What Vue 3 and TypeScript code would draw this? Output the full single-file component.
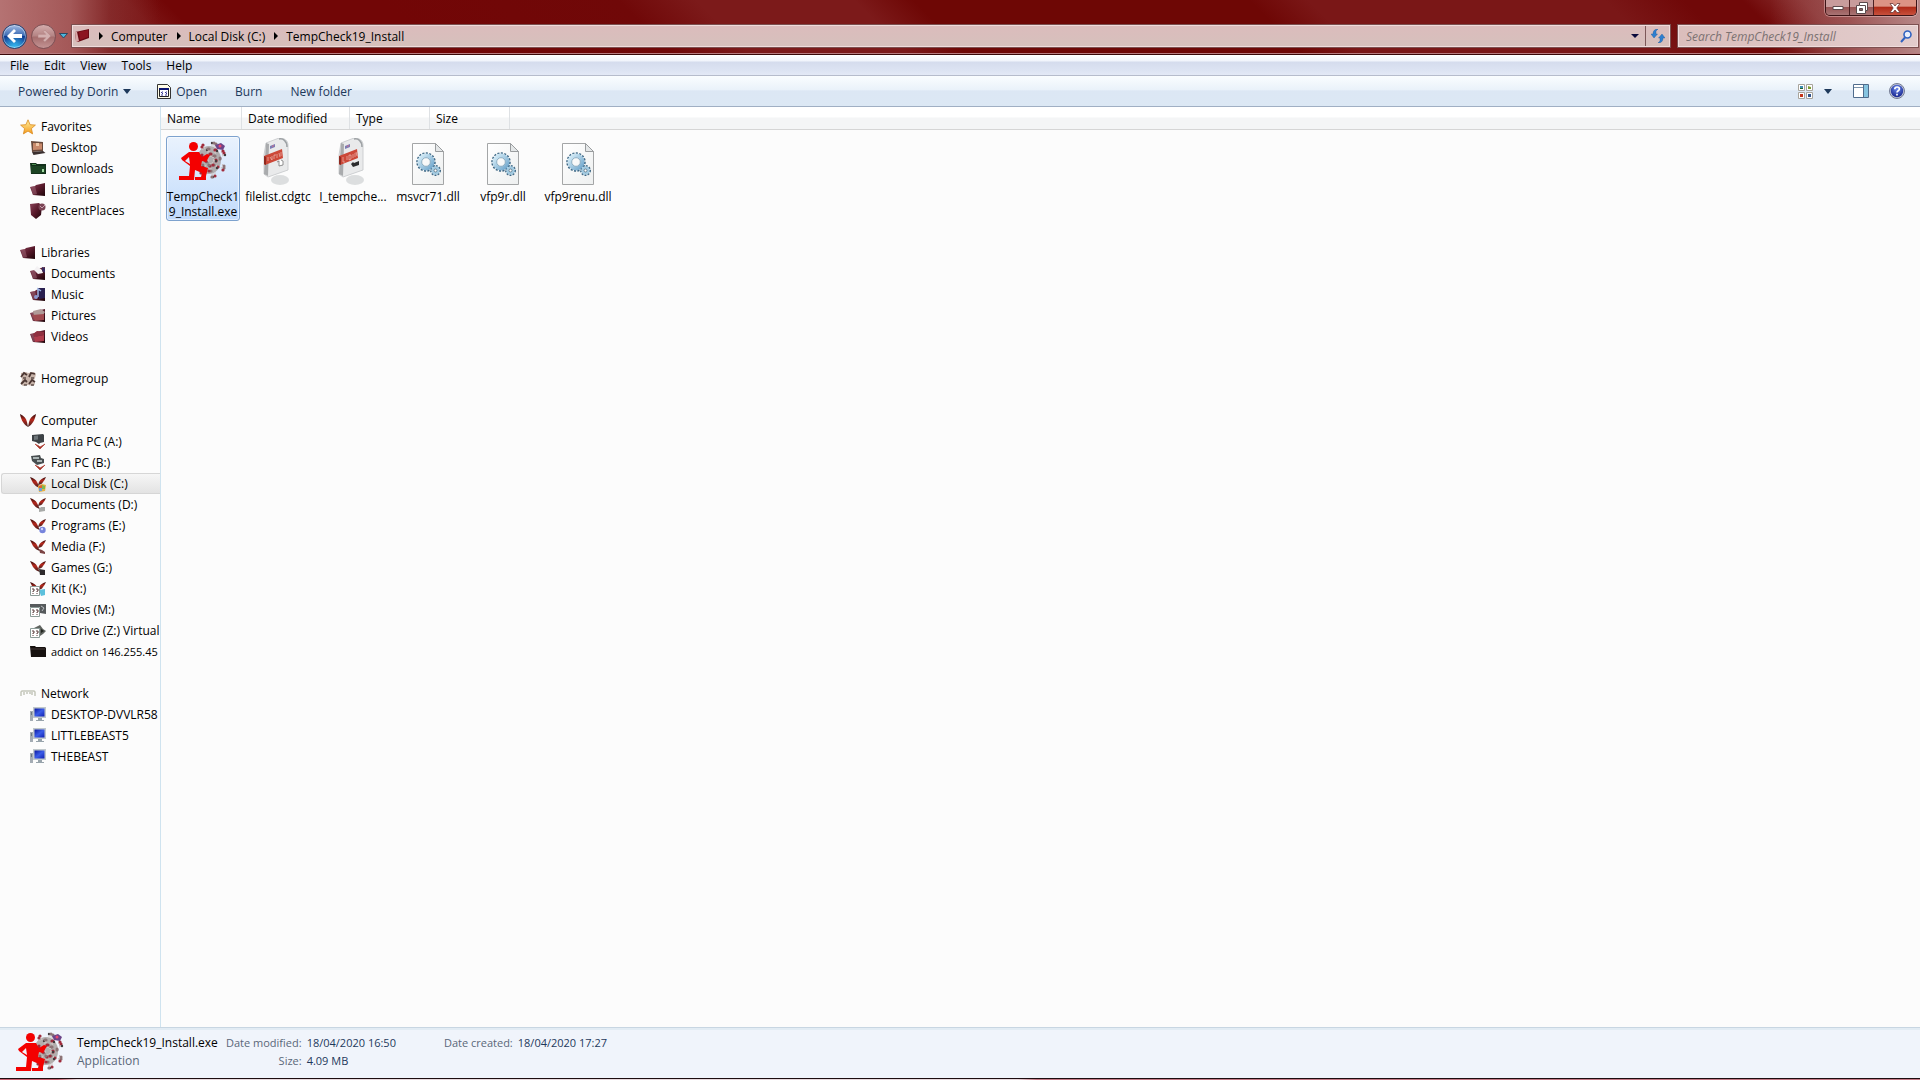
<script setup lang="ts">
interface NavItem { label: string; icon: string; selected?: boolean; compact?: boolean }
interface NavGroup { label: string; icon: string; items: NavItem[] }
interface FileItem { name: string; icon: string; selected?: boolean }

const menus: string[] = ['File', 'Edit', 'View', 'Tools', 'Help']
const crumbs: string[] = ['Computer', 'Local Disk (C:)', 'TempCheck19_Install']

const groups: NavGroup[] = [
  {
    label: 'Favorites', icon: 'star', items: [
      { label: 'Desktop', icon: 'desktop' },
      { label: 'Downloads', icon: 'downloads' },
      { label: 'Libraries', icon: 'folder' },
      { label: 'RecentPlaces', icon: 'recent' },
    ],
  },
  {
    label: 'Libraries', icon: 'folder', items: [
      { label: 'Documents', icon: 'documents' },
      { label: 'Music', icon: 'music' },
      { label: 'Pictures', icon: 'pictures' },
      { label: 'Videos', icon: 'videos' },
    ],
  },
  { label: 'Homegroup', icon: 'homegroup', items: [] },
  {
    label: 'Computer', icon: 'wings', items: [
      { label: 'Maria PC (A:)', icon: 'pc-a' },
      { label: 'Fan PC (B:)', icon: 'pc-b' },
      { label: 'Local Disk (C:)', icon: 'drive-c', selected: true },
      { label: 'Documents (D:)', icon: 'drive-d' },
      { label: 'Programs (E:)', icon: 'drive-e' },
      { label: 'Media (F:)', icon: 'drive-f' },
      { label: 'Games (G:)', icon: 'drive-g' },
      { label: 'Kit (K:)', icon: 'drive-k' },
      { label: 'Movies (M:)', icon: 'drive-m' },
      { label: 'CD Drive (Z:) Virtual', icon: 'drive-z' },
      { label: 'addict on 146.255.45', icon: 'black-folder', compact: true },
    ],
  },
  {
    label: 'Network', icon: 'network', items: [
      { label: 'DESKTOP-DVVLR58', icon: 'monitor' },
      { label: 'LITTLEBEAST5', icon: 'monitor' },
      { label: 'THEBEAST', icon: 'monitor' },
    ],
  },
]

const files: FileItem[] = [
  { name: 'TempCheck19_Install.exe', icon: 'exe', selected: true },
  { name: 'filelist.cdgtc', icon: 'cdgtc' },
  { name: 'I_tempche...', icon: 'library' },
  { name: 'msvcr71.dll', icon: 'dll' },
  { name: 'vfp9r.dll', icon: 'dll' },
  { name: 'vfp9renu.dll', icon: 'dll' },
]

// Spikes of the virus ball, laid out in rings round its centre.
const spikes = Array.from({ length: 54 }, (_, i) => {
  const ring = i % 3
  const angle = (i * 137.5 * Math.PI) / 180
  const r = 5 + ring * 5
  return {
    x1: Math.round(32 + Math.cos(angle) * (r - 3)),
    y1: Math.round(22 + Math.sin(angle) * (r - 2)),
    x: Math.round(32 + Math.cos(angle) * r * 0.95),
    y: Math.round(22 + Math.sin(angle) * r * 1.15),
    red: i % 5 < 2,
    dark: i % 5 === 2,
  }
})
</script>

<template>
  <svg class="defs" aria-hidden="true">
    <defs>
      <linearGradient id="g-folder" x1="0" y1="0" x2="1" y2="1">
        <stop offset="0" stop-color="#8a4458" /><stop offset=".5" stop-color="#5a1a2c" /><stop offset="1" stop-color="#1c0408" />
      </linearGradient>
      <linearGradient id="g-star" x1="0" y1="0" x2="0" y2="1">
        <stop offset="0" stop-color="#fff2a0" /><stop offset="1" stop-color="#f59a1c" />
      </linearGradient>
      <linearGradient id="g-wing" x1="0" y1="0" x2="0" y2="1">
        <stop offset="0" stop-color="#2e0c0c" /><stop offset=".45" stop-color="#b8281c" /><stop offset="1" stop-color="#3c2020" />
      </linearGradient>
      <linearGradient id="g-blue" x1="0" y1="0" x2="1" y2="1">
        <stop offset="0" stop-color="#0a18a0" /><stop offset=".5" stop-color="#3a5ce8" /><stop offset="1" stop-color="#1020b0" />
      </linearGradient>
      <linearGradient id="g-page" x1="0" y1="0" x2="1" y2="1">
        <stop offset="0" stop-color="#ffffff" /><stop offset="1" stop-color="#eef0f0" />
      </linearGradient>
      <linearGradient id="g-gear" x1="0" y1="0" x2="1" y2="1">
        <stop offset="0" stop-color="#d8eef8" /><stop offset="1" stop-color="#6fa6cc" />
      </linearGradient>
      <radialGradient id="g-help" cx=".5" cy=".3" r=".7">
        <stop offset="0" stop-color="#6d8cf0" /><stop offset="1" stop-color="#16248c" />
      </radialGradient>
    </defs>

    <symbol id="i-star" viewBox="0 0 16 16">
      <path d="M8 .8l2.1 4.9 5.3.4-4 3.5 1.2 5.3L8 12.100l-4.600 2.800 1.200-5.300-4-3.500 5.300-.4z" fill="url(#g-star)" stroke="#d98a1e" stroke-width=".8" />
    </symbol>
    <symbol id="i-desktop" viewBox="0 0 16 16">
      <path d="M1 1l12 1v9l-11 1z" fill="#6a4a3c" /><path d="M3 3l9 .5v6L3 10z" fill="#c98a6c" />
      <path d="M6 3h3v3H6z" fill="#f0c8a8" /><path d="M2 12l11-1 2.500 2-12 2z" fill="#3a3030" />
    </symbol>
    <symbol id="i-downloads" viewBox="0 0 16 16">
      <path d="M0 2h6l1 1h9v10H1z" fill="#12301a" /><path d="M1 5h14v7H1z" fill="#1c4424" />
      <path d="M2 3h4v1H2z" fill="#4a8c50" /><path d="M12 8h2v3h-2z" fill="#9fd89f" />
    </symbol>
    <symbol id="i-folder" viewBox="0 0 16 16">
      <path d="M0 5l5-1 1-1 9-2v13L3 13z" fill="url(#g-folder)" /><path d="M1 5l4-1 2 8-4 1z" fill="#a06878" opacity=".5" />
    </symbol>
    <symbol id="i-recent" viewBox="0 0 16 16">
      <path d="M0 1l9-1 3 3-1 9-5 4-5-4z" fill="url(#g-folder)" /><circle cx="12" cy="4" r="3.500" fill="#7a4454" /><path d="M10 3l2 2 3-3" stroke="#c8a0b0" fill="none" />
    </symbol>
    <symbol id="i-documents" viewBox="0 0 16 16">
      <use href="#i-folder" /><path d="M4 4l3-4 5 4 1 3-5 1z" fill="#f4f2f4" /><path d="M12 1l3 1v5l-3-2z" fill="#3a2a5c" />
    </symbol>
    <symbol id="i-music" viewBox="0 0 16 16">
      <use href="#i-folder" /><path d="M8 1h7v10l-6 1z" fill="#2a2050" /><path d="M8 10V2l3 2" stroke="#9cb4e4" fill="none" stroke-width="1.500" /><circle cx="6" cy="10" r="2" fill="#8c98d0" />
    </symbol>
    <symbol id="i-pictures" viewBox="0 0 16 16">
      <use href="#i-folder" /><path d="M3 3l8-2 4 3-2 3-9 1z" fill="#b09a98" /><path d="M2 7l12-1v6l-9 1z" fill="#a04a50" />
    </symbol>
    <symbol id="i-videos" viewBox="0 0 16 16">
      <use href="#i-folder" /><path d="M3 5l4-3 7 1v3L4 8z" fill="#903040" /><path d="M4 8l10-2v6l-9 1z" fill="#b03c4c" />
    </symbol>
    <symbol id="i-homegroup" viewBox="0 0 16 16">
      <path d="M1 2l5-1 2 1 6-1 2 2-1 4-1 2 1 4-2 2-5-1-5 1-2-2 1-5-1-3z" fill="#c8b4aa" />
      <g fill="none" stroke="#4a3632" stroke-width="1.800"><path d="M1 6l3-4 3 2M9 6l2-4 4 1M1 13l4-4 2 2M9 13l3-4 3 2" /></g>
      <path d="M3 7h3M11 7h3M4 14h3M11 14h3" stroke="#2a1c1a" />
    </symbol>
    <symbol id="i-wings" viewBox="0 0 16 16">
      <path d="M0 1c4 2 6 4 7 8l1 5C4 12 1 7 0 1z" fill="url(#g-wing)" />
      <path d="M16 1c-4 2-6 4-7 8l-1 5c4-2 7-7 8-13z" fill="url(#g-wing)" />
    </symbol>
    <symbol id="i-drive" viewBox="0 0 16 16">
      <path d="M0 1c4 1 6 3 7 5l3 6c-4-1-5-3-7-5C2 5 1 3 0 1z" fill="url(#g-wing)" />
      <path d="M16 1c-4 1-6 3-7 5l-1 3c3-1 4-1 5-3 1-1 2-3 3-5z" fill="url(#g-wing)" />
    </symbol>
    <symbol id="i-drive-c" viewBox="0 0 16 16"><use href="#i-drive" /><path d="M8 10l4-2 4 1-1 6-6 1z" fill="#e8b040" /><path d="M9 10l3-1v3H9z" fill="#e06030" /><path d="M12 9l3 1v3h-3z" fill="#80b850" /><path d="M9 12h3v3H9z" fill="#68a0d8" /></symbol>
    <symbol id="i-drive-d" viewBox="0 0 16 16"><use href="#i-drive" /><path d="M9 12l2-2h4v4l-6 1z" fill="#a8aaa8" /></symbol>
    <symbol id="i-drive-e" viewBox="0 0 16 16"><use href="#i-drive" /><circle cx="12.500" cy="12" r="3.200" fill="#7684dc" /><circle cx="12" cy="11" r="1.200" fill="#cdd4ff" /></symbol>
    <symbol id="i-drive-f" viewBox="0 0 16 16"><use href="#i-drive" /><path d="M9 10l3 1 3 2v2l-5-1z" fill="#7c4444" /></symbol>
    <symbol id="i-drive-g" viewBox="0 0 16 16"><use href="#i-drive" /><path d="M9 9l6 1v5h-5z" fill="#2e2a2c" /></symbol>
    <symbol id="i-qmark" viewBox="0 0 16 16">
      <path d="M.5 5.500h9v9h-9z" fill="#fff" stroke="#8c9c98" />
      <path d="M2 8h2v2H3v1M6 8h2v2H7v1M3 12v1M7 12v1" stroke="#5a3c3c" fill="none" />
    </symbol>
    <symbol id="i-drive-k" viewBox="0 0 16 16"><use href="#i-drive" /><path d="M9 9l6-1v6l-4 1z" fill="#5cc0dc" /><use href="#i-qmark" /></symbol>
    <symbol id="i-drive-m" viewBox="0 0 16 16"><path d="M0 2h16v10l-6-1V5H0z" fill="#565a5c" /><path d="M11 4l3 2-2 3" stroke="#b8bcc0" fill="none" /><use href="#i-qmark" /></symbol>
    <symbol id="i-drive-z" viewBox="0 0 16 16"><path d="M4 5l6-3 3 4 3 2-3 3-3 2V6z" fill="#606460" /><path d="M11 6l3 2-3 2z" fill="#20241e" /><use href="#i-qmark" /></symbol>
    <symbol id="i-vee" viewBox="0 0 16 16"><path d="M5 10l4 2 1 1 5-3-5 5z" fill="#a83428" stroke="#a83428" stroke-width=".6" /></symbol>
    <symbol id="i-pc-a" viewBox="0 0 16 16"><path d="M2 1l11-1 1 1v7l-4 1-1 1-3-2-4-1z" fill="#3c4246" /><path d="M4 2l4-.5v4L4 6z" fill="#6c7478" /><use href="#i-vee" /></symbol>
    <symbol id="i-pc-b" viewBox="0 0 16 16"><path d="M1 1l9-1 1 3 3 1v4l-7 2-5-4z" fill="#484e50" /><path d="M3 2h6v2H3zM7 5h5v2H7z" fill="#aab4b4" /><use href="#i-vee" /></symbol>
    <symbol id="i-black-folder" viewBox="0 0 16 16"><path d="M0 2h5l1 1h9l1 1v9H1z" fill="#16110f" /><path d="M1 5h14" stroke="#463a38" /></symbol>
    <symbol id="i-network" viewBox="0 0 16 16"><path d="M1 10V6l1-1h12l1 1v4M4 6v3M7 6v2M10 6v2M12 6v3" fill="none" stroke="#c4c6ba" stroke-width="1.500" /></symbol>
    <symbol id="i-monitor" viewBox="0 0 16 16">
      <path d="M0 4h3v10H0z" fill="#a4acb4" /><path d="M1 5h1v3H1z" fill="#6c7880" />
      <path d="M3 0h13v11H3z" fill="#c0c8cc" /><path d="M4.500 1.500h10v8h-10z" fill="url(#g-blue)" /><path d="M8 11h4v2h2v1H6v-1h2z" fill="#98a4ac" />
    </symbol>

    <symbol id="i-exe" viewBox="0 0 48 48">
      <ellipse cx="30" cy="22" rx="12" ry="14" fill="#a49c9a" opacity=".8" />
      <g v-for="(s, i) in spikes" :key="i">
        <path :d="`M${s.x1} ${s.y1}L${s.x} ${s.y}`" stroke="#cfc6c4" stroke-width="1" />
        <circle :cx="s.x" :cy="s.y" :r="s.dark ? 1.2 : 1.6" :fill="s.red ? '#a02c3c' : s.dark ? '#403a3c' : '#8c7476'" />
      </g>
      <path d="M36 7l6-2 4 3-2 4-6-1z" fill="#6c4488" /><circle cx="41" cy="8" r="1.500" fill="#e84870" />
      <circle cx="14.500" cy="8.500" r="4.500" fill="#f40000" />
      <path d="M10 14h10l3 5 5-3 3 1-4 7-4-1-1 5 7 2-2 8v4H16v-3h6l1-4-7-3-1 10H0v-4h10l1-10-8-6-1-2zM10 19l-4 4 5 3z" fill="#f40000" fill-rule="evenodd" />
    </symbol>
    <symbol id="i-tagpage" viewBox="0 0 48 48">
      <ellipse cx="26" cy="42" rx="9" ry="5" fill="#dcdedf" />
      <path d="M12 5L25 0c6 0 9 3 9 7v25l-20 7-4-3V17z" fill="#e9eaeb" stroke="#c4c7c9" stroke-width=".8" />
      <path d="M12 5l3 1-1 32-4-2z" fill="#a9abad" />
      <path d="M25 1c4-1 8 2 8 8" fill="none" stroke="#9da1a4" stroke-width="1.500" />
      <path d="M16 8l5-2v3l-5 2z" fill="#7c7cb4" /><path d="M18 8l2-1v1l-2 1z" fill="#d06c88" />
      <path d="M10 18l18-7 1 9-18 7-1-1z" fill="#cc4838" /><path d="M10 18l2 1v8l-2-1z" fill="#8f2a20" />
    </symbol>
    <symbol id="i-cdgtc" viewBox="0 0 48 48">
      <use href="#i-tagpage" />
      <path d="M14 19v4M16 19l2 3v-4M20 17v4M20 17h2M23 16v4M25 15l1 4M27 14v4" stroke="#f3cfc8" fill="none" stroke-width=".6" />
      <path d="M23 24l2-1v5l4-1v-4l-2-1" stroke="#777" fill="#fff" stroke-width=".8" />
    </symbol>
    <symbol id="i-library" viewBox="0 0 48 48">
      <use href="#i-tagpage" />
      <path d="M14 19v5h2M18 18v4M20 17v5l2-1v-4zM24 16v4M26 15v4M27 14l1 4" stroke="#f3cfc8" fill="none" stroke-width=".6" />
      <path d="M22 26l2-2 1 1 5-2v4l-6 2z" fill="#2c2c2e" />
    </symbol>
    <symbol id="i-dll" viewBox="0 0 48 48">
      <path d="M8.500 5.500h23l8 8v33h-31z" fill="url(#g-page)" stroke="#a4a6a7" />
      <path d="M31.500 5.500v8h8z" fill="#e4e7e8" stroke="#999c9e" />
      <g fill="none" stroke="#3f6885"><circle cx="22" cy="24" r="8.500" stroke-width="2.500" stroke-dasharray="2 1.300" /><circle cx="31.500" cy="32.500" r="4.500" stroke-width="2" stroke-dasharray="1.800 1.200" /></g>
      <circle cx="22" cy="24" r="6.500" fill="none" stroke="url(#g-gear)" stroke-width="4" />
      <circle cx="22" cy="24" r="4.300" fill="none" stroke="#6a93ae" stroke-width=".7" />
      <circle cx="31.500" cy="32.500" r="3" fill="#fff" stroke="#a3cbe2" stroke-width="2.500" />
      <circle cx="31.500" cy="32.500" r="1.500" fill="#fff" stroke="#37566c" stroke-width=".7" />
    </symbol>
  </svg>

  <div class="window">
    <header class="glass">
      <div class="controls">
        <button class="ctl" aria-label="Minimize"><svg width="12" height="6" viewBox="0 0 12 6"><path d="M1 1.500h10v3H1z" fill="#fff" stroke="#5b4a4c" /></svg></button>
        <button class="ctl" aria-label="Restore"><svg width="12" height="12" viewBox="0 0 12 12"><path d="M3.500.5h8v8h-2v3h-9v-8h3z" fill="#fff" stroke="#5b4a4c" /><path d="M3.500 6.500h3v2h-3z" fill="#8b6466" stroke="#5b4a4c" /><path d="M4 3.500h5.500v5" fill="none" stroke="#5b4a4c" /></svg></button>
        <button class="ctl close" aria-label="Close"><svg width="12" height="10" viewBox="0 0 12 10"><path d="M1 .5h3l2 2.500 2-2.500h3L7.800 5 11 9.500H8L6 7 4 9.500H1L4.200 5z" fill="#fff" stroke="#6b3a38" stroke-width=".8" /></svg></button>
      </div>
      <div class="nav-row">
        <button class="round back" aria-label="Back"><svg width="16" height="14" viewBox="0 0 16 14"><path d="M7 0L0 7l7 7 2-2-3-3h9V5H6l3-3z" fill="#fff" /></svg></button>
        <button class="round forward" aria-label="Forward"><svg width="14" height="12" viewBox="0 0 16 14"><path d="M9 0l7 7-7 7-2-2 3-3H1V5h9L7 2z" fill="#d3b0b0" stroke="#b08080" stroke-width=".6" /></svg></button>
        <button class="history" aria-label="Recent pages"><svg width="9" height="6" viewBox="0 0 9 6"><path d="M.5.5h8l-4 4.500z" fill="#4cb4dc" stroke="#173a56" stroke-width=".8" /></svg></button>
        <nav class="address" aria-label="Address">
          <svg width="16" height="14" viewBox="0 0 16 14"><path d="M0 3l5-1 9-2v9L3 13l-2-1z" fill="#6a0a14" /><path d="M4 3l9-2v7L5 11z" fill="#8c1420" /><path d="M0 3l2 0 2 9-3 1z" fill="#d8a8a8" /></svg>
          <template v-for="c in crumbs" :key="c">
            <svg class="sep" width="4" height="8" viewBox="0 0 4 8"><path d="M0 0l4 4-4 4z" fill="#000" /></svg>
            <a href="#" class="crumb">{{ c }}</a>
          </template>
          <span class="grow"></span>
          <button class="addr-drop" aria-label="Previous locations"><svg width="8" height="4" viewBox="0 0 8 4"><path d="M0 0h8L4 4z" fill="#0a0a3c" /></svg></button>
          <button class="refresh" aria-label="Refresh"><svg width="14" height="14" viewBox="0 0 14 14"><path d="M0 5l3 4 3.500-4H5V2l2-2C4 0 2 1.500 2 5z" fill="#2f7fd0" stroke="#1e5c9c" stroke-width=".4" /><path d="M14 9l-3-4-3.500 4H9v3l-2 2c3 0 5-1.500 5-5z" fill="#2f7fd0" stroke="#1e5c9c" stroke-width=".4" /></svg></button>
        </nav>
        <div class="search">
          <input type="search" aria-label="Search" placeholder="Search TempCheck19_Install" />
          <svg width="12" height="13" viewBox="0 0 12 13"><circle cx="7.500" cy="4.500" r="3.500" fill="#e8eefc" stroke="#2f62c0" stroke-width="1.600" /><path d="M5 7.500L1 12" stroke="#2f62c0" stroke-width="2" /></svg>
        </div>
      </div>
    </header>

    <nav class="menubar" aria-label="Menu">
      <button v-for="m in menus" :key="m">{{ m }}</button>
    </nav>

    <div class="toolbar">
      <button class="tool powered">Powered by Dorin <svg width="8" height="5" viewBox="0 0 8 5"><path d="M0 0h8L4 5z" fill="#1e395b" /></svg></button>
      <button class="tool open">
        <svg width="14" height="15" viewBox="0 0 14 15"><path d="M.5.500h10l3 3v11H.5z" fill="#fffde8" stroke="#333" /><path d="M2.500 4.500h9v8h-9z" fill="#fff" stroke="#222" /><path d="M2 4h10v2H2z" fill="#0a1470" /><path d="M4 8l2 2M8 8l2 2M4 11h2M8 11h2M5 8h1M9 8h1" stroke="#3c3c98" /></svg>
        Open
      </button>
      <button class="tool burn">Burn</button>
      <button class="tool">New folder</button>
      <span class="grow"></span>
      <button class="tool views" aria-label="Change your view">
        <svg width="15" height="15" viewBox="0 0 15 15"><path d="M.5.500h6v6h-6zM8.500.500h6v6h-6zM.5 8.500h6v6h-6zM8.500 8.500h6v6h-6z" fill="#fff" stroke="#a8a49c" /><path d="M2 2h3v2H2z" fill="#3c8cb0" /><path d="M2 4h3v1H2z" fill="#20642c" /><path d="M10 2l3 1v2h-3z" fill="#7c9c30" /><path d="M2 10h3v3H2z" fill="#c43418" /><path d="M10 10h3v3h-3z" fill="#30548c" /></svg>
      </button>
      <button class="tool view-drop" aria-label="More options"><svg width="8" height="5" viewBox="0 0 8 5"><path d="M0 0h8L4 5z" fill="#1e395b" /></svg></button>
      <button class="tool pane" aria-label="Show the preview pane">
        <svg width="16" height="14" viewBox="0 0 16 14"><path d="M.5.500h15v13H.5z" fill="#fff" stroke="#506c8c" /><path d="M1 3.500h9" stroke="#7c94ac" /><path d="M10.500 1v12.500" stroke="#506c8c" /><path d="M11 1h4v12h-4z" fill="#86c4e0" /></svg>
      </button>
      <button class="tool" aria-label="Get help">
        <svg width="16" height="16" viewBox="0 0 16 16"><circle cx="8" cy="8" r="7.500" fill="#c4c8d8" stroke="#747c94" /><circle cx="8" cy="8" r="6.200" fill="url(#g-help)" /><path d="M5.800 6.200c0-3 4.600-2.800 4.600-.2C10.400 7.700 8 7.700 8 9.500M8 10.800v1.700" fill="none" stroke="#fff" stroke-width="1.700" /></svg>
      </button>
    </div>

    <div class="body">
      <aside class="sidebar">
        <section v-for="g in groups" :key="g.label" class="group">
          <a href="#" class="row head"><svg width="16" height="16"><use :href="`#i-${g.icon}`" /></svg>{{ g.label }}</a>
          <a v-for="it in g.items" :key="it.label" href="#" class="row child" :class="{ selected: it.selected, compact: it.compact }">
            <svg width="16" height="16"><use :href="`#i-${it.icon}`" /></svg>{{ it.label }}
          </a>
        </section>
      </aside>
      <main class="content">
        <div class="columns">
          <button class="name">Name</button>
          <button class="date">Date modified</button>
          <button>Type</button>
          <button>Size</button>
        </div>
        <div class="files">
          <button v-for="f in files" :key="f.name" class="file" :class="{ selected: f.selected }">
            <svg width="48" height="48"><use :href="`#i-${f.icon}`" /></svg>
            <span>{{ f.name }}</span>
          </button>
        </div>
      </main>
    </div>

    <footer class="details">
      <svg width="48" height="44" viewBox="0 2 48 44"><use href="#i-exe" width="48" height="48" /></svg>
      <div class="title"><strong>TempCheck19_Install.exe</strong><span>Application</span></div>
      <dl class="meta first">
        <dt>Date modified:</dt><dd>18/04/2020 16:50</dd>
        <dt>Size:</dt><dd>4.09 MB</dd>
      </dl>
      <dl class="meta">
        <dt>Date created:</dt><dd>18/04/2020 17:27</dd>
      </dl>
    </footer>
    <div class="edge"></div>
  </div>
</template>

<style>
html, body { margin: 0; overflow: hidden; }
</style>

<style scoped>
.defs { position: absolute; width: 0; height: 0; }
.window {
  display: flex; flex-direction: column; height: 100vh; overflow: hidden;
  font: 12px/15px "Segoe UI", "Open Sans", "Noto Sans", sans-serif; color: #000; background: #fcfcfc;
}
button { font: inherit; color: inherit; background: none; border: 0; padding: 0; margin: 0; }
a { color: inherit; text-decoration: none; }
svg { display: block; flex: none; }
.grow { flex: 1; }

.glass {
  position: relative; box-sizing: border-box; height: 55px; flex: none; padding: 22px 2px 0 2px;
  border-bottom: 1px solid #3a0808; box-shadow: inset 0 -1px #b87c80;
  background:
    linear-gradient(90deg, rgba(190, 130, 130, .85), rgba(180, 115, 115, .7) 70px, rgba(140, 60, 60, .5) 110px, transparent 160px),
    linear-gradient(270deg, rgba(190, 150, 150, .8), rgba(170, 110, 110, .5) 70px, transparent 150px),
    linear-gradient(45deg, #801a1a 0, #7c1616 9%, #720606 11%, #720606 22%, #700808 34%, #7c1a1a 38%, #7c1a1a 46%, #6e0705 49%, #6e0705 66%, #7a1717 69%, #7a1717 84%, #700808 88%, #700808 91%, #8a3030 94%, #9c5050 100%);
}
.controls {
  position: absolute; top: 0; right: 3px; display: flex; height: 15px;
  border: 1px solid #3c1416; border-top: 0; border-radius: 0 0 5px 5px; overflow: hidden;
  box-shadow: 0 0 0 1px rgba(255, 220, 220, .4);
}
.ctl {
  display: flex; align-items: center; justify-content: center; width: 24px;
  border-right: 1px solid #4c2022; background: linear-gradient(#c89c9c 0 45%, #955 50%, #a87474);
}
.close { width: 42px; border: 0; background: linear-gradient(#dc9484 0 40%, #b02c18 50%, #c8503c); }
.nav-row { display: flex; align-items: center; height: 28px; }
.round { display: flex; align-items: center; justify-content: center; width: 25px; height: 25px; border-radius: 50%; box-sizing: border-box; }
.back { border: 1px solid #28406c; background: radial-gradient(circle at 50% 100%, #38c0f4, transparent 55%), linear-gradient(#a4bce4, #3c6cb4 45%, #103c90 50%, #1c60b4); box-shadow: inset 0 0 0 1px rgba(255, 255, 255, .4); }
.forward { margin-left: 4px; border: 1px solid #7c5054; background: linear-gradient(#d4acac, #b48484 48%, #a46c6c 52%, #c49494); }
.history { margin: 0 4px 0 3px; }
.address {
  flex: 1; display: flex; align-items: center; height: 22px; box-sizing: border-box; padding-left: 2px;
  border: 1px solid #f0dcdc; outline: 1px solid #7c5050; background: linear-gradient(#dbbcbc, #d6c0bc);
}
.sep { margin: 0 8px; }
.crumb + .sep { margin-left: 9px; }
.addr-drop { display: flex; align-items: center; justify-content: center; width: 20px; height: 20px; }
.refresh { display: flex; align-items: center; justify-content: center; width: 24px; height: 20px; border-left: 1px solid #7c5858; }
.search {
  display: flex; align-items: center; box-sizing: border-box; width: 240px; height: 22px; margin-left: 8px; padding: 0 5px 0 7px;
  border: 1px solid #f0dcdc; outline: 1px solid #7c5050; background: linear-gradient(90deg, #dbbebc, #e2cccc);
}
.search input { flex: 1; min-width: 0; padding: 0; border: 0; outline: 0; background: none; font: italic 12px/15px "Segoe UI", "Open Sans", "Noto Sans", sans-serif; }
.search input::placeholder { color: #7c7272; opacity: 1; }

.menubar {
  display: flex; align-items: center; gap: 15px; height: 20px; flex: none; padding-left: 10px;
  border-bottom: 1px solid #b6bccc; background: linear-gradient(#fff, #f0f4fb 30%, #d5dced 35%, #dde4f3 80%, #e3e9f6);
}
.toolbar {
  display: flex; align-items: center; height: 30px; flex: none; padding: 0 15px 0 18px; color: #1e395b;
  border-bottom: 1px solid #a0afc3; background: linear-gradient(#fafdff, #eaf2fa 45%, #dce7f4 50%, #dce8f4);
}
.tool { display: flex; align-items: center; gap: 5px; }
.powered { margin-right: 26px; }
.open { margin-right: 28px; }
.burn { margin-right: 28px; }
.views { margin-right: 11px; }
.view-drop { margin-right: 21px; }
.pane { margin-right: 20px; }

.body { display: flex; flex: 1; min-height: 0; }
.sidebar { box-sizing: border-box; width: 161px; flex: none; padding-top: 9px; border-right: 1px solid #cfe3ef; overflow: hidden; }
.group { margin-bottom: 21px; }
.row { display: flex; align-items: center; gap: 5px; height: 21px; padding-left: 20px; white-space: nowrap; box-sizing: border-box; }
.child { padding-left: 30px; }
.compact { font-size: 11px; }
.child.selected { margin-left: 1px; padding-left: 28px; border: 1px solid #d6d6d6; border-right: 0; border-radius: 3px 0 0 3px; background: linear-gradient(#f6f6f6, #e3e3e3); }
.content { flex: 1; min-width: 0; }
.columns { display: flex; height: 22px; border-bottom: 1px solid #d5d5d5; background: linear-gradient(#fff 45%, #f4f5f6 50%); }
.columns button { box-sizing: border-box; width: 80px; padding-left: 6px; text-align: left; border-right: 1px solid #dee1e4; }
.columns .name { width: 81px; }
.columns .date { width: 108px; }
.files { display: flex; flex-wrap: wrap; column-gap: 1px; padding: 6px 5px; align-items: flex-start; }
.file { display: flex; flex-direction: column; align-items: center; gap: 3px; box-sizing: border-box; width: 74px; padding: 1px 0; border: 1px solid transparent; border-radius: 3px; }
.file span { width: 74px; text-align: center; overflow-wrap: anywhere; }
.file.selected { border-color: #7da2ce; background: linear-gradient(#e9f2fd, #c1dbfc); box-shadow: inset 0 0 0 1px rgba(255, 255, 255, .5); }

.details { display: flex; height: 50px; flex: none; padding-left: 16px; border-top: 1px solid #c8d6e2; background: #f0f4fb; box-shadow: inset 0 2px #e2ecf4; color: #5a6779; }
.details > svg { margin-top: 3px; }
.title { display: flex; flex-direction: column; gap: 3px; padding-top: 7px; margin-left: 13px; width: 149px; white-space: nowrap; }
.title strong { font-weight: 400; color: #000; }
.meta { display: grid; grid-template-columns: auto auto; column-gap: 5px; row-gap: 3px; align-content: start; margin: 0; padding-top: 7px; white-space: nowrap; font-size: 11px; }
.meta.first { margin-right: 48px; }
.meta dt { text-align: right; }
.meta dd { margin: 0; color: #1e395b; }
.edge { height: 1px; flex: none; border-top: 1px solid #1c0c10; background: linear-gradient(90deg, #c86070 0 3%, #e8d8dc 4% 53%, #c47884 54%); }
</style>
